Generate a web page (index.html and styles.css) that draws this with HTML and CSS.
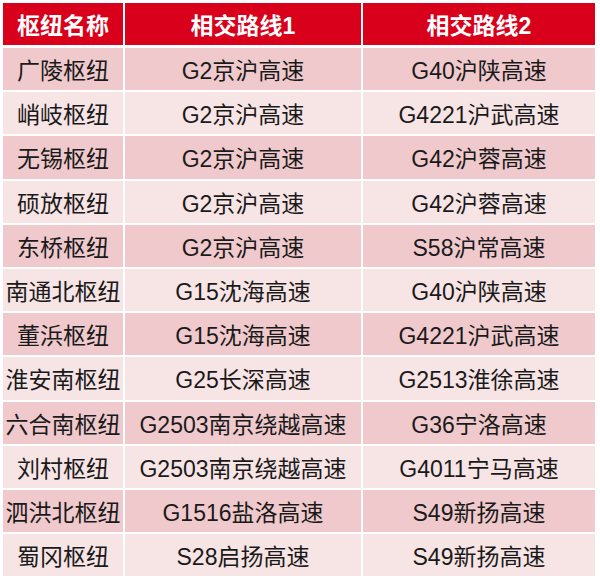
FILE: index.html
```html
<!DOCTYPE html>
<html lang="zh-CN">
<head>
<meta charset="utf-8">
<title>枢纽</title>
<link rel="stylesheet" href="styles.css">
</head>
<body>
<div class="table">
  <div class="row head"><div class="cell">枢纽名称</div><div class="cell">相交路线1</div><div class="cell">相交路线2</div></div>
  <div class="body">
    <div class="row"><div class="cell">广陵枢纽</div><div class="cell">G2京沪高速</div><div class="cell">G40沪陕高速</div></div>
    <div class="row"><div class="cell">峭岐枢纽</div><div class="cell">G2京沪高速</div><div class="cell">G4221沪武高速</div></div>
    <div class="row"><div class="cell">无锡枢纽</div><div class="cell">G2京沪高速</div><div class="cell">G42沪蓉高速</div></div>
    <div class="row"><div class="cell">硕放枢纽</div><div class="cell">G2京沪高速</div><div class="cell">G42沪蓉高速</div></div>
    <div class="row"><div class="cell">东桥枢纽</div><div class="cell">G2京沪高速</div><div class="cell">S58沪常高速</div></div>
    <div class="row"><div class="cell">南通北枢纽</div><div class="cell">G15沈海高速</div><div class="cell">G40沪陕高速</div></div>
    <div class="row"><div class="cell">董浜枢纽</div><div class="cell">G15沈海高速</div><div class="cell">G4221沪武高速</div></div>
    <div class="row"><div class="cell">淮安南枢纽</div><div class="cell">G25长深高速</div><div class="cell">G2513淮徐高速</div></div>
    <div class="row"><div class="cell">六合南枢纽</div><div class="cell">G2503南京绕越高速</div><div class="cell">G36宁洛高速</div></div>
    <div class="row"><div class="cell">刘村枢纽</div><div class="cell">G2503南京绕越高速</div><div class="cell">G4011宁马高速</div></div>
    <div class="row"><div class="cell">泗洪北枢纽</div><div class="cell">G1516盐洛高速</div><div class="cell">S49新扬高速</div></div>
    <div class="row"><div class="cell">蜀冈枢纽</div><div class="cell">S28启扬高速</div><div class="cell">S49新扬高速</div></div>
  </div>
</div>
</body>
</html>
```

FILE: styles.css
```css
html, body {
  margin: 0;
  padding: 0;
  background: #ffffff;
}
body {
  padding: 3px 5px 0 3px;
  font-family: "Liberation Sans", "Noto Sans CJK SC", sans-serif;
  font-size: 23px;
  color: #1a1a1a;
}
.table {
  width: 592px;
  display: flex;
  flex-direction: column;
  gap: 3px;
}
.body {
  display: flex;
  flex-direction: column;
  gap: 2px;
}
.row {
  display: grid;
  grid-template-columns: 120px 236px 232px;
  column-gap: 2px;
  height: 42.2px;
}
.cell {
  display: flex;
  align-items: center;
  justify-content: center;
  white-space: nowrap;
}
.head {
  height: 42px;
}
.head .cell {
  background: #d8001a;
  color: #ffffff;
  font-weight: bold;
}
.body .row:nth-child(odd) .cell {
  background: #efc9cc;
}
.body .row:nth-child(even) .cell {
  background: #f7e4e5;
}
```
